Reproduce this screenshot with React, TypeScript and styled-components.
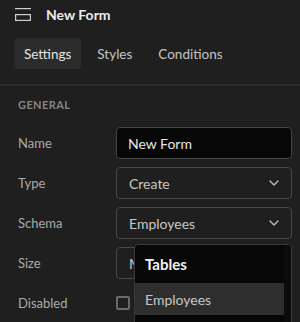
import { useState } from 'react';
import styled, { createGlobalStyle } from 'styled-components';

const GlobalStyle = createGlobalStyle`
  html, body {
    margin: 0;
    padding: 0;
    background: #1f1f1f;
  }
  body {
    font-family: Lato, 'Noto Sans', sans-serif;
    color: #d6d6d6;
    overflow: hidden;
  }
`;

const Panel = styled.div`
  width: 300px;
  height: 322px;
  background: #1f1f1f;
  overflow: hidden;
`;

const Header = styled.header`
  display: flex;
  align-items: center;
  gap: 15px;
  height: 28px;
  padding: 0 15px;
`;

const MenuButton = styled.span`
  display: inline-flex;
  color: #d0d0d0;
`;

const Title = styled.h1`
  margin: 0;
  font-size: 14px;
  font-weight: 700;
  color: #ececec;
`;

const TabList = styled.div`
  display: flex;
  gap: 6px;
  padding: 10px 14px 0;
`;

const Tab = styled.button<{ $active?: boolean }>`
  height: 31px;
  padding: 0 10px;
  border: none;
  border-radius: 4px;
  background: ${(p) => (p.$active ? '#2b2b2b' : 'transparent')};
  color: ${(p) => (p.$active ? '#e4e4e4' : '#c4c4c4')};
  font-family: inherit;
  font-size: 13.5px;
  cursor: pointer;
`;

const Divider = styled.hr`
  margin: 15px 0 0;
  border: none;
  height: 2px;
  background: #2c2c2c;
`;

const Section = styled.section`
  padding: 12px 8px 0 18px;
`;

const SectionTitle = styled.h2`
  margin: 0 0 16px;
  font-size: 11px;
  font-weight: 700;
  letter-spacing: 0.4px;
  color: #858585;
`;

const Rows = styled.div`
  display: flex;
  flex-direction: column;
  gap: 8px;
`;

const Row = styled.div`
  display: grid;
  grid-template-columns: 98px 1fr;
  align-items: center;
  height: 32px;
`;

const Label = styled.span`
  font-size: 13px;
  color: #aaaaaa;
`;

const Field = styled.div`
  position: relative;
`;

const TextInput = styled.input`
  box-sizing: border-box;
  width: 100%;
  height: 32px;
  padding: 0 11px;
  border: 1px solid #454545;
  border-radius: 4px;
  background: #070707;
  color: #e6e6e6;
  font-family: inherit;
  font-size: 14px;
  outline: none;
`;

const Select = styled.div`
  box-sizing: border-box;
  display: flex;
  align-items: center;
  justify-content: space-between;
  height: 32px;
  padding: 0 12px;
  border: 1px solid #474747;
  border-radius: 4px;
  background: #1f1f1f;
  color: #c8c8c8;
  font-size: 14px;
`;

const Chevron = styled.svg`
  flex: none;
`;

const Checkbox = styled.span`
  box-sizing: border-box;
  display: block;
  width: 14px;
  height: 14px;
  border: 2px solid #6a6a6a;
  border-radius: 2px;
`;

const Popup = styled.div`
  position: absolute;
  top: 37px;
  left: 18px;
  right: 0;
  height: 90px;
  display: flex;
  border: 1px solid #393939;
  border-radius: 4px;
  background: #070707;
  overflow: hidden;
  z-index: 2;
`;

const PopupList = styled.div`
  flex: 1;
`;

const GroupTitle = styled.div`
  height: 38px;
  display: flex;
  align-items: center;
  padding: 0 10px;
  font-size: 15px;
  font-weight: 700;
  color: #f2f2f2;
`;

const Option = styled.div<{ $highlighted?: boolean }>`
  height: 32px;
  display: flex;
  align-items: center;
  padding: 0 10px;
  font-size: 14px;
  color: #c6c6c6;
  background: ${(p) => (p.$highlighted ? '#2e2e2e' : 'transparent')};
`;

const ScrollTrack = styled.div`
  width: 7px;
  background: #0b0b0b;
`;

const ChevronDown = () => (
  <Chevron width="10" height="6" viewBox="0 0 10 6" fill="none">
    <path d="M1 1l4 4 4-4" stroke="#bdbdbd" strokeWidth="1.4" strokeLinecap="round" strokeLinejoin="round" />
  </Chevron>
);

const tabs = ['Settings', 'Styles', 'Conditions'];

export default function App() {
  const [active, setActive] = useState('Settings');

  return (
    <Panel>
      <GlobalStyle />
      <Header>
        <MenuButton>
          <svg width="16" height="13" viewBox="0 0 16 13" fill="none" stroke="currentColor" strokeWidth="1.2">
            <path d="M0 0.6h16" />
            <rect x="0.6" y="6.6" width="14.8" height="5.8" />
          </svg>
        </MenuButton>
        <Title>New Form</Title>
      </Header>

      <TabList>
        {tabs.map((t) => (
          <Tab key={t} $active={active === t} onClick={() => setActive(t)}>
            {t}
          </Tab>
        ))}
      </TabList>
      <Divider />

      <Section>
        <SectionTitle>GENERAL</SectionTitle>
        <Rows>
          <Row>
            <Label>Name</Label>
            <TextInput defaultValue="New Form" />
          </Row>
          <Row>
            <Label>Type</Label>
            <Select>
              Create
              <ChevronDown />
            </Select>
          </Row>
          <Row>
            <Label>Schema</Label>
            <Field>
              <Select>
                Employees
                <ChevronDown />
              </Select>
              <Popup>
                <PopupList>
                  <GroupTitle>Tables</GroupTitle>
                  <Option $highlighted>Employees</Option>
                </PopupList>
                <ScrollTrack />
              </Popup>
            </Field>
          </Row>
          <Row>
            <Label>Size</Label>
            <Select>
              Medium
              <ChevronDown />
            </Select>
          </Row>
          <Row>
            <Label>Disabled</Label>
            <Checkbox />
          </Row>
        </Rows>
      </Section>
    </Panel>
  );
}
